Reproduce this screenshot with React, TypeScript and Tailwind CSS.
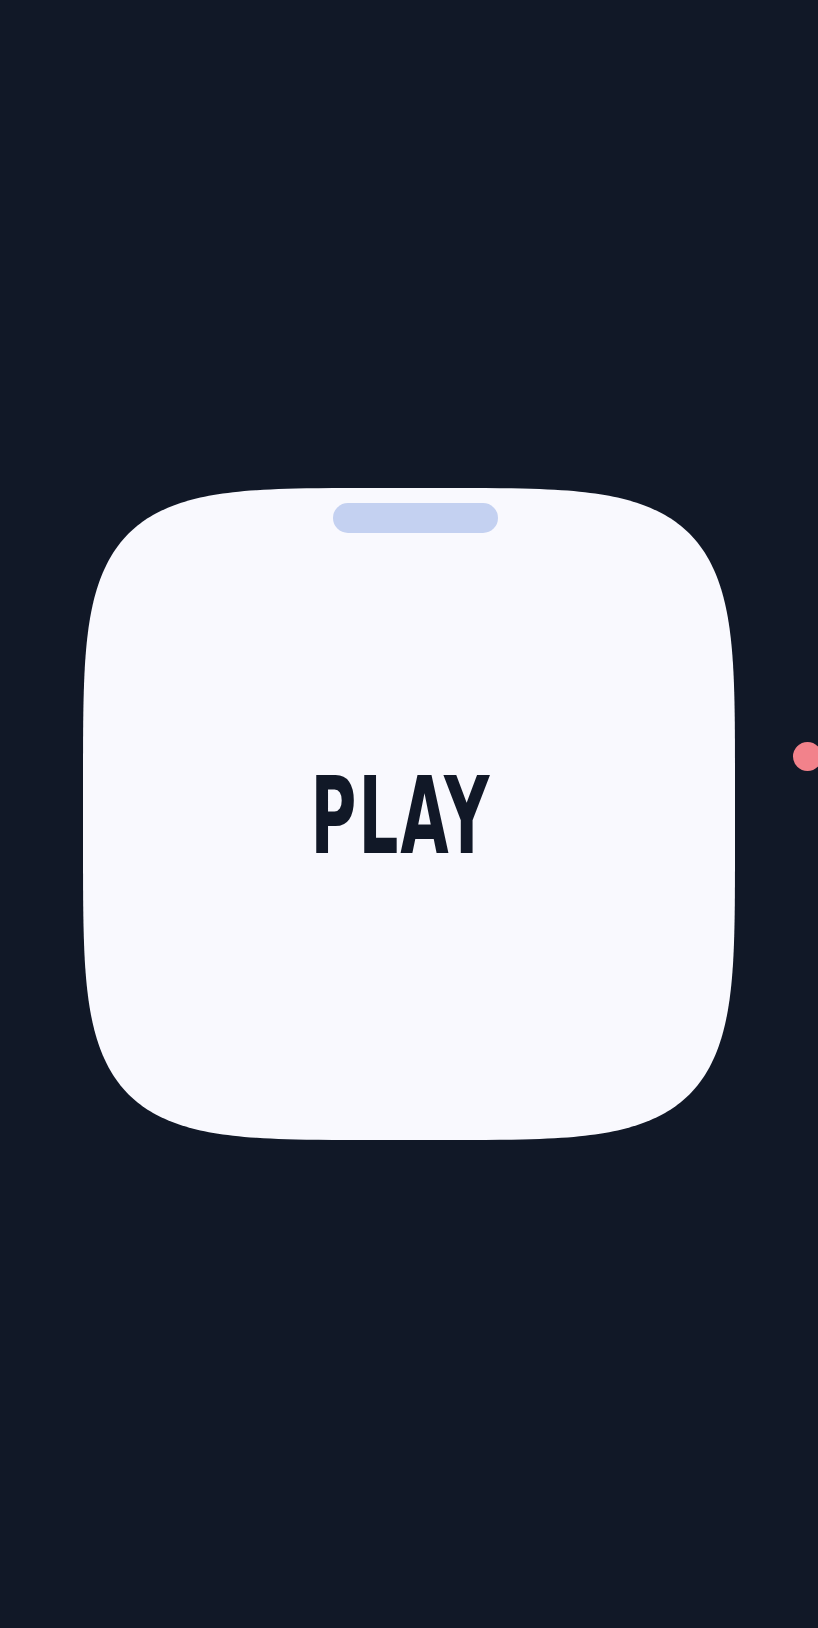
import React from 'react';

// superellipse outline, drawn as a polygon
function squirclePoints(size: number, n: number) {
  const a = size / 2;
  const pts: string[] = [];
  const steps = 360;
  for (let i = 0; i < steps; i++) {
    const t = (i / steps) * Math.PI * 2;
    const c = Math.cos(t);
    const s = Math.sin(t);
    const x = a + a * Math.sign(c) * Math.pow(Math.abs(c), 2 / n);
    const y = a + a * Math.sign(s) * Math.pow(Math.abs(s), 2 / n);
    pts.push(`${x.toFixed(2)},${y.toFixed(2)}`);
  }
  return pts.join(' ');
}

export default function App() {
  const size = 652;
  return (
    <div className="relative min-h-[1628px] w-full overflow-hidden bg-[#111827] flex items-center justify-center">
      <div className="relative w-[652px] h-[652px] flex items-center justify-center">
        <svg className="absolute inset-0" width={size} height={size} viewBox={`0 0 ${size} ${size}`}>
          <polygon points={squirclePoints(size, 4.6)} fill="#f9f9fe" />
        </svg>
        <div className="absolute top-[15px] left-[250px] w-[165px] h-[30px] rounded-full bg-[#c4d1f1]" />
        <span
          className="relative -translate-x-[8px] translate-y-[2px] scale-x-[0.65] text-[107px] leading-none font-bold text-[#111827] tracking-[3px]"
          style={{ fontFamily: '"Liberation Sans Narrow", "DejaVu Sans Condensed", "Liberation Sans", sans-serif' }}
        >
          PLAY
        </span>
      </div>
      <div className="absolute left-[793px] top-[742px] w-[29px] h-[29px] rounded-full bg-[#f2828b]" />
    </div>
  );
}
